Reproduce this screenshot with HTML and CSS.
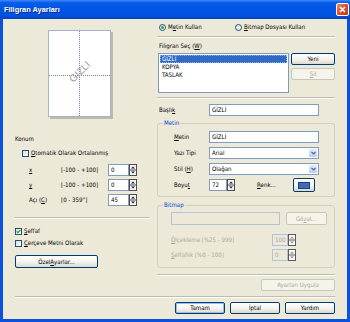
FILE: index.html
```html
<!DOCTYPE html>
<html lang="tr">
<head>
    <meta charset="utf-8">
    <title>Filigran Ayarları</title>
    <link rel="stylesheet" href="styles.css">
</head>
<body>
<div class="window">
    <div class="titlebar">
        <span class="title">Filigran Ayarları</span>
        <span class="close-btn">
            <svg width="7" height="7" viewBox="0 0 7 7"><path d="M1 1L6 6M6 1L1 6" stroke="#fff" stroke-width="1.6"/></svg>
        </span>
    </div>

    <div class="frame">
        <div class="main">
            <!-- left column: preview + position -->
            <div class="left-col">
                <div class="preview">
                    <span class="guide-v"></span>
                    <span class="guide-h"></span>
                    <span class="mark">GIZLI</span>
                </div>

                <div class="caption konum">Konum</div>

                <label class="check-row auto">
                    <span class="checkbox"></span>
                    <span><u>O</u>tomatik Olarak Ortalanmış</span>
                </label>

                <div class="pos-row first">
                    <span class="pos-name"><u>x</u></span>
                    <span class="pos-range">[-100 - +100]</span>
                    <span class="field num">0</span>
                    <svg class="spin" width="8" height="12" viewBox="0 0 8 12"><rect x="0.5" y="0.5" width="7" height="11" fill="#f4f4f8" stroke="#4e4e4e"/><line x1="0" y1="6" x2="8" y2="6" stroke="#4e4e4e"/><path d="M2 4.5L4 2.5L6 4.5Z" fill="#1e1e1e"/><path d="M2 7.5L4 9.5L6 7.5Z" fill="#1e1e1e"/></svg>
                </div>
                <div class="pos-row">
                    <span class="pos-name"><u>y</u></span>
                    <span class="pos-range">[-100 - +100]</span>
                    <span class="field num">0</span>
                    <svg class="spin" width="8" height="12" viewBox="0 0 8 12"><rect x="0.5" y="0.5" width="7" height="11" fill="#f4f4f8" stroke="#4e4e4e"/><line x1="0" y1="6" x2="8" y2="6" stroke="#4e4e4e"/><path d="M2 4.5L4 2.5L6 4.5Z" fill="#1e1e1e"/><path d="M2 7.5L4 9.5L6 7.5Z" fill="#1e1e1e"/></svg>
                </div>
                <div class="pos-row">
                    <span class="pos-name">Açı (<u>C</u>)</span>
                    <span class="pos-range">[0 - 359°]</span>
                    <span class="field num">45</span>
                    <svg class="spin" width="8" height="12" viewBox="0 0 8 12"><rect x="0.5" y="0.5" width="7" height="11" fill="#f4f4f8" stroke="#4e4e4e"/><line x1="0" y1="6" x2="8" y2="6" stroke="#4e4e4e"/><path d="M2 4.5L4 2.5L6 4.5Z" fill="#1e1e1e"/><path d="M2 7.5L4 9.5L6 7.5Z" fill="#1e1e1e"/></svg>
                </div>

                <div class="sep left-sep"></div>

                <label class="check-row seffaf">
                    <span class="checkbox checked">
                        <svg width="5" height="5" viewBox="0 0 5 5"><path d="M0.6 2.4L1.9 3.7L4.4 1" fill="none" stroke="#21a121" stroke-width="1.2"/></svg>
                    </span>
                    <span><u>Ş</u>effaf</span>
                </label>
                <label class="check-row cerceve">
                    <span class="checkbox"></span>
                    <span><u>Ç</u>erçeve Metni Olarak</span>
                </label>

                <div class="btn ozel">Özel <u>A</u>yarlar...</div>
            </div>

            <!-- right column: watermark settings -->
            <div class="right-col">
                <div class="radio-row">
                    <label class="radio-item metin-radio"><span class="radio on"></span><span>M<u>e</u>tin Kullan</span></label>
                    <label class="radio-item"><span class="radio"></span><span><u>B</u>itmap Dosyası Kullan</span></label>
                </div>

                <div class="sep sep-top"></div>

                <div class="caption filigran">Filigran Seç (<u>W</u>)</div>

                <div class="list-row">
                    <div class="listbox">
                        <div class="list-item selected">GİZLİ</div>
                        <div class="list-item">KOPYA</div>
                        <div class="list-item">TASLAK</div>
                    </div>
                    <div class="list-btns">
                        <div class="btn">Yeni</div>
                        <div class="btn disabled"><u>S</u>il</div>
                    </div>
                </div>

                <div class="sep sep-mid"></div>

                <div class="form-row baslik">
                    <span class="row-label">Başlı<u>k</u></span>
                    <span class="field wide">GİZLİ</span>
                </div>

                <div class="group metin-group">
                    <span class="group-title">Metin</span>
                    <div class="form-row">
                        <span class="row-label"><u>M</u>etin</span>
                        <span class="field wide">GİZLİ</span>
                    </div>
                    <div class="form-row">
                        <span class="row-label">Yazı Tipi</span>
                        <span class="field wide select">Arial
                            <span class="drop"><svg width="5" height="4" viewBox="0 0 5 4"><path d="M0.5 0.8L2.5 2.8L4.5 0.8" fill="none" stroke="#4d6185" stroke-width="1.2"/></svg></span>
                        </span>
                    </div>
                    <div class="form-row">
                        <span class="row-label">Stil (<u>H</u>)</span>
                        <span class="field wide select">Olağan
                            <span class="drop"><svg width="5" height="4" viewBox="0 0 5 4"><path d="M0.5 0.8L2.5 2.8L4.5 0.8" fill="none" stroke="#4d6185" stroke-width="1.2"/></svg></span>
                        </span>
                    </div>
                    <div class="form-row">
                        <span class="row-label">Boyu<u>t</u></span>
                        <span class="field size">72</span>
                        <svg class="spin" width="8" height="12" viewBox="0 0 8 12"><rect x="0.5" y="0.5" width="7" height="11" fill="#f4f4f8" stroke="#4e4e4e"/><line x1="0" y1="6" x2="8" y2="6" stroke="#4e4e4e"/><path d="M2 4.5L4 2.5L6 4.5Z" fill="#1e1e1e"/><path d="M2 7.5L4 9.5L6 7.5Z" fill="#1e1e1e"/></svg>
                        <span class="renk"><u>R</u>enk...</span>
                        <span class="btn color-btn"><span class="swatch"></span></span>
                    </div>
                </div>

                <div class="group bitmap-group">
                    <span class="group-title">Bitmap</span>
                    <div class="file-row">
                        <span class="field off file"></span>
                        <span class="btn disabled gozat">Gö<u>z</u>at...</span>
                    </div>
                    <div class="bm-row first">
                        <span class="bm-label"><u>Ö</u>lçekleme [%25 - 999]</span>
                        <span class="field off small">100</span>
                        <svg class="spin" width="8" height="12" viewBox="0 0 8 12"><rect x="0.5" y="0.5" width="7" height="11" fill="#fbfbfb" stroke="#5a5a5a"/><line x1="0" y1="6" x2="8" y2="6" stroke="#5a5a5a"/><path d="M2 4.5L4 2.5L6 4.5Z" fill="#8a8a8a"/><path d="M2 7.5L4 9.5L6 7.5Z" fill="#8a8a8a"/></svg>
                    </div>
                    <div class="bm-row">
                        <span class="bm-label"><u>Ş</u>effaflık [%0 - 100]</span>
                        <span class="field off small">0</span>
                        <svg class="spin" width="8" height="12" viewBox="0 0 8 12"><rect x="0.5" y="0.5" width="7" height="11" fill="#fbfbfb" stroke="#5a5a5a"/><line x1="0" y1="6" x2="8" y2="6" stroke="#5a5a5a"/><path d="M2 4.5L4 2.5L6 4.5Z" fill="#8a8a8a"/><path d="M2 7.5L4 9.5L6 7.5Z" fill="#8a8a8a"/></svg>
                    </div>
                </div>

                <div class="sep sep-bottom"></div>

                <div class="apply-row">
                    <span class="btn disabled apply">Ayarları Uygula</span>
                </div>
            </div>
        </div>

        <div class="sep footer-sep"></div>

        <div class="footer">
            <span class="btn default">Tamam</span>
            <span class="btn">İptal</span>
            <span class="btn">Yardım</span>
        </div>
    </div>
</div>
</body>
</html>
```

FILE: styles.css
```css
* {
    margin: 0;
    padding: 0;
    box-sizing: border-box;
}

body {
    width: 350px;
    height: 322px;
    overflow: hidden;
    font-family: "DejaVu Sans Condensed", "Liberation Sans", sans-serif;
    font-size: 6.1px;
    line-height: 8px;
    color: #000;
    background: #fff;
}

u {
    text-decoration: underline;
    text-underline-offset: 1px;
}

.window {
    width: 350px;
    height: 322px;
    display: flex;
    flex-direction: column;
}

/* title bar */
.titlebar {
    height: 19px;
    display: flex;
    align-items: center;
    justify-content: space-between;
    padding: 0 1px 0 4px;
    background: linear-gradient(#3d8bff 0%, #0a5ce9 14%, #0055e5 45%, #0052de 80%, #0041c2 100%);
}

.title {
    font-family: "Liberation Sans", sans-serif;
    font-weight: bold;
    font-size: 7.4px;
    color: #fff;
    text-shadow: 1px 1px 0 #0b2a8f;
}

.close-btn {
    width: 13px;
    height: 13px;
    display: flex;
    align-items: center;
    justify-content: center;
    border: 1px solid #fff;
    border-radius: 2px;
    background: linear-gradient(135deg, #f09070, #e0522c 45%, #c2361a);
}

/* window body */
.frame {
    flex: 1;
    display: flex;
    flex-direction: column;
    padding: 2px 12px 0 12px;
    background: #ece9d8;
    border: 3px solid #0a52dd;
    border-top: none;
}

.main {
    display: flex;
    gap: 8px;
}

.left-col {
    width: 134px;
    display: flex;
    flex-direction: column;
}

.right-col {
    flex: 1;
    display: flex;
    flex-direction: column;
}

.sep {
    height: 2px;
    border-top: 1px solid #c1bdab;
    border-bottom: 1px solid #fff;
}

.caption {
    height: 8px;
}

/* preview page */
.preview {
    position: relative;
    width: 63px;
    height: 87px;
    margin: 9px 0 0 33px;
    background: #fff;
    border: 1px solid #a7b3cf;
    box-shadow: 2px 2px 0 #bdbaa9;
    overflow: hidden;
}

.guide-v {
    position: absolute;
    left: 30px;
    top: 0;
    bottom: 0;
    border-left: 1px dotted #6f83b3;
}

.guide-h {
    position: absolute;
    top: 44px;
    left: 0;
    right: 0;
    border-top: 1px dotted #6f83b3;
}

.mark {
    position: absolute;
    left: 14px;
    top: 36px;
    width: 34px;
    text-align: center;
    font-family: "Liberation Sans", sans-serif;
    font-size: 10px;
    line-height: 10px;
    color: #9a9a9a;
    transform: rotate(-45deg);
}

/* position block */
.konum {
    margin-top: 18px;
}

.check-row {
    height: 8px;
    display: flex;
    align-items: center;
    gap: 2px;
}

.check-row.auto {
    margin-top: 6px;
    padding-left: 7px;
}

.check-row.seffaf {
    margin-top: 8px;
}

.check-row.cerceve {
    margin-top: 4px;
}

.checkbox {
    width: 7px;
    height: 7px;
    display: flex;
    align-items: center;
    justify-content: center;
    border: 1px solid #1c5180;
    background: linear-gradient(135deg, #dcdcd5, #fff);
}

.pos-row {
    height: 12px;
    display: flex;
    align-items: center;
    margin-top: 3px;
    padding-left: 14px;
}

.pos-row.first {
    margin-top: 7px;
}

.pos-name {
    width: 32px;
}

.pos-range {
    width: 47px;
}

.field {
    height: 12px;
    display: flex;
    align-items: center;
    padding-left: 2px;
    background: #fff;
    border: 1px solid #7f9db9;
    white-space: nowrap;
}

.field.num {
    width: 21px;
}

.spin {
    display: block;
    flex: none;
}

.left-sep {
    margin-top: 11px;
}

.btn {
    height: 12px;
    display: flex;
    align-items: center;
    justify-content: center;
    border: 1px solid #003c74;
    border-radius: 2px;
    background: linear-gradient(#fff, #f3f3ee 55%, #dcd8cc);
    white-space: nowrap;
}

.btn.disabled {
    color: #aca899;
    border-color: #c9c7ba;
    background: #f5f4ea;
}

.btn.default {
    box-shadow: inset 0 0 0 1px #9bbcf2;
}

.btn.ozel {
    width: 83px;
    height: 13px;
    margin-top: 8px;
}

/* right column */
.radio-row {
    height: 12px;
    display: flex;
    align-items: center;
    padding-left: 2px;
}

.radio-item {
    display: flex;
    align-items: center;
    gap: 2px;
}

.metin-radio {
    width: 76px;
}

.radio {
    width: 7px;
    height: 7px;
    display: flex;
    align-items: center;
    justify-content: center;
    border: 1px solid #1c5180;
    border-radius: 50%;
    background: linear-gradient(135deg, #dcdcd5, #fff);
}

.radio.on::after {
    content: "";
    width: 3px;
    height: 3px;
    border-radius: 50%;
    background: #2fa52f;
}

.sep-top {
    margin-top: 3px;
}

.filigran {
    margin-top: 4px;
    padding-left: 2px;
}

.list-row {
    display: flex;
    gap: 2px;
    margin-top: 3px;
}

.listbox {
    width: 131px;
    height: 40px;
    margin-left: 1px;
    padding: 1px;
    background: #fff;
    border: 1px solid #7f9db9;
}

.list-item {
    height: 8px;
    padding-left: 2px;
}

.list-item.selected {
    background: #316ac5;
    color: #fff;
    outline: 1px dotted #8fb0e8;
    outline-offset: -1px;
}

.list-btns {
    width: 44px;
    display: flex;
    flex-direction: column;
    gap: 3px;
}

.sep-mid {
    margin-top: 4px;
}

.form-row {
    height: 12px;
    display: flex;
    align-items: center;
}

.form-row.baslik {
    margin-top: 5px;
    padding-left: 2px;
}

.row-label {
    width: 50px;
}

.field.wide {
    width: 110px;
}

.field.select {
    justify-content: space-between;
    padding-right: 1px;
}

.drop {
    width: 8px;
    height: 8px;
    display: flex;
    align-items: center;
    justify-content: center;
    border-radius: 1px;
    background: linear-gradient(#e3ebfd, #bccdf6);
}

/* group boxes */
.group {
    position: relative;
    border: 1px solid #d0d0bf;
    border-radius: 3px;
}

.group-title {
    position: absolute;
    top: -5px;
    left: 5px;
    padding: 0 1px;
    background: #ece9d8;
    color: #0046d5;
}

.metin-group {
    margin-top: 7px;
    padding: 7px 0 5px 16px;
    display: flex;
    flex-direction: column;
    gap: 4px;
}

.metin-group .row-label {
    width: 35px;
}

.field.size {
    width: 18px;
}

.renk {
    margin-left: 22px;
    width: 36px;
}

.btn.color-btn {
    width: 22px;
    height: 14px;
    margin: -1px 0;
}

.swatch {
    width: 12px;
    height: 7px;
    background: #3f6bbd;
    border: 1px solid #24407a;
}

.bitmap-group {
    margin-top: 8px;
    padding: 6px 0 6px 13px;
}

.file-row {
    display: flex;
    gap: 6px;
}

.field.off {
    background: #ece9d8;
    border-color: #b6c3d6;
    color: #aca899;
}

.field.file {
    width: 109px;
    height: 13px;
}

.btn.gozat {
    width: 41px;
    height: 13px;
}

.bm-row {
    height: 12px;
    display: flex;
    align-items: center;
    margin-top: 3px;
}

.bm-row.first {
    margin-top: 9px;
}

.bm-label {
    width: 101px;
    color: #aca899;
}

.field.small {
    width: 16px;
}

.sep-bottom {
    margin-top: 6px;
}

.apply-row {
    display: flex;
    justify-content: flex-end;
    margin-top: 3px;
}

.btn.apply {
    width: 74px;
}

/* footer */
.footer-sep {
    margin-top: 5px;
}

.footer {
    display: flex;
    justify-content: flex-end;
    gap: 5px;
    margin-top: 4px;
}

.footer .btn {
    width: 50px;
}
```
